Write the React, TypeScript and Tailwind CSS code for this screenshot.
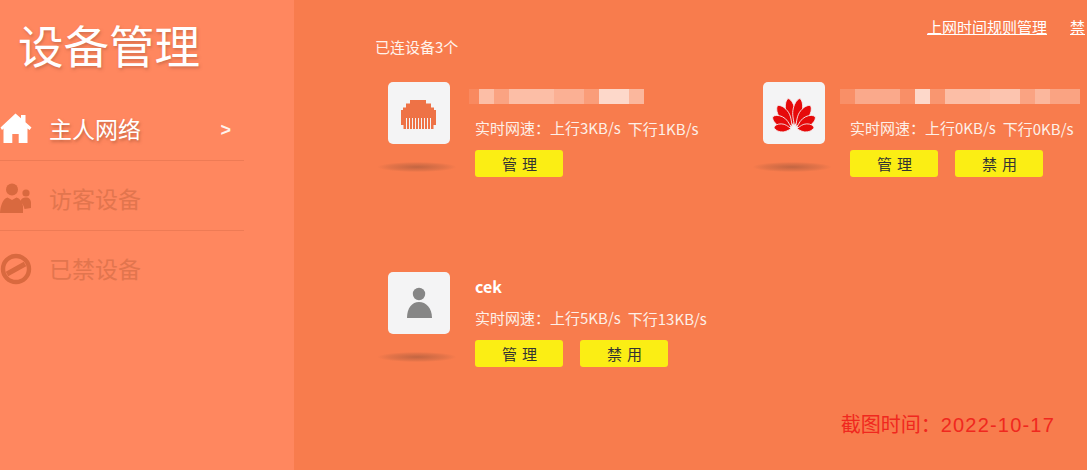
import React from "react";

const cjk = "font-['Noto_Sans_CJK_SC','Noto_Sans',sans-serif]";

function House() {
  return (
    <svg width="32" height="32" viewBox="0 0 32 32" fill="#fff">
      <path d="M15.5 1.5 L21 6.3 V3 H25.5 V10.2 L31.5 15.5 L29.6 18 L27.5 16.4 V31 H18.7 V22 H12.3 V31 H3.5 V16.4 L2 18 L0.5 15.5 Z" />
    </svg>
  );
}

function Guests() {
  return (
    <svg width="32" height="32" viewBox="0 0 32 32" fill="#D9693F">
      <circle cx="12" cy="7.5" r="6" />
      <path d="M0 31 C0.5 24 2.5 17 7.5 15.5 L12 18 L16.5 15.5 C20 16.5 22 19.5 23 24 V31 Z" />
      <circle cx="26" cy="11" r="3.6" />
      <path d="M20.5 20 C21 16.5 23 15.5 26 15.5 C29 15.5 31 17.5 31 21 V26 L24.5 27 C24 24 22.5 21.5 20.5 20 Z" />
    </svg>
  );
}

function Ban() {
  return (
    <svg width="32" height="32" viewBox="0 0 32 32" fill="none" stroke="#D9693F">
      <circle cx="16" cy="16" r="13" strokeWidth="4.4" />
      <path d="M7 21 L25 11" strokeWidth="5" />
    </svg>
  );
}

function Ethernet() {
  return (
    <svg width="62" height="62" viewBox="0 0 62 62">
      <path
        fill="#EE7246"
        d="M22 18 H38 V21.5 H43 V25.5 H46 V28 H48 V43 H45.5 V47 H15.5 V43 H13 V28 H15 V25.5 H18 V21.5 H22 Z"
      />
      <g stroke="#F4F4F5" strokeWidth="1">
        {[18.5, 21.5, 24.5, 27.5, 30.5, 33.5, 36.5, 39.5, 42.5].map((x) => (
          <line key={x} x1={x} x2={x} y1="36" y2="47" />
        ))}
      </g>
    </svg>
  );
}

function Huawei() {
  const petals = [
    [-11, 31, 4.6],
    [11, 31, 4.6],
    [-35, 28.5, 5],
    [35, 28.5, 5],
    [-60, 24.5, 4.8],
    [60, 24.5, 4.8],
    [-85, 20, 4],
    [85, 20, 4],
  ];
  return (
    <svg width="62" height="62" viewBox="0 0 62 62">
      <g transform="translate(31 47)" fill="#E60A0A">
        {petals.map(([a, l, w]) => (
          <path
            key={a}
            transform={`rotate(${a})`}
            d={`M0 -3 C${-w * 0.5} ${-l * 0.3} ${-w * 1.1} ${-l * 0.45} ${-w} ${-l * 0.66} C${-w * 0.95} ${-l * 0.84} ${-w * 0.45} ${-l * 0.98} 0 ${-l} C${w * 0.45} ${-l * 0.98} ${w * 0.95} ${-l * 0.84} ${w} ${-l * 0.66} C${w * 1.1} ${-l * 0.45} ${w * 0.5} ${-l * 0.3} 0 -3 Z`}
            stroke="#F4F4F5"
            strokeWidth="0.8"
          />
        ))}
      </g>
    </svg>
  );
}

function Person() {
  return (
    <svg width="62" height="62" viewBox="0 0 62 62" fill="#868686">
      <circle cx="31" cy="22" r="6.2" />
      <path d="M19 46 C19 36 24 30 31 30 C38 30 44 36 44 46 Z" />
    </svg>
  );
}

const nameOne = [
  "w-[10px] bg-white/10",
  "w-[15px] bg-white/50",
  "w-[15px] bg-white/30",
  "w-[45px] bg-white/50",
  "w-[30px] bg-white/40",
  "w-[15px] bg-white/25",
  "w-[30px] bg-white/70",
  "w-[15px] bg-white/45",
];

const nameTwo = [
  "w-[15px] bg-white/15",
  "w-[45px] bg-white/35",
  "w-[15px] bg-white/15",
  "w-[15px] bg-white/70",
  "w-[15px] bg-white/20",
  "w-[45px] bg-white/50",
  "w-[30px] bg-white/55",
  "w-[15px] bg-white/30",
  "w-[15px] bg-white/45",
  "w-[30px] bg-white/30",
];

function Blur({ blocks, shift }: { blocks: string[]; shift: string }) {
  return (
    <div className={`flex h-[15px] mt-[7px] mb-[14px] ${shift}`}>
      {blocks.map((c, i) => (
        <div key={i} className={`h-full ${c}`} />
      ))}
    </div>
  );
}

function Btn({ label }: { label: string }) {
  return (
    <button className="w-[88px] h-[27px] pl-[6px] rounded-[3px] bg-[#FBEE14] text-[#333] text-[15px] leading-[27px] tracking-[5px] text-center">
      {label}
    </button>
  );
}

function Card({
  icon,
  name,
  up,
  down,
  disable,
}: {
  icon: React.ReactNode;
  name: React.ReactNode;
  up: string;
  down: string;
  disable?: boolean;
}) {
  return (
    <div className="flex w-[375px] h-full">
      <div className="relative w-[62px] h-[62px] shrink-0">
        <div className="w-[62px] h-[62px] rounded-[5px] bg-[#F4F4F5]">{icon}</div>
        <div className="absolute left-[-10px] top-[80px] w-[78px] h-[10px] bg-[radial-gradient(ellipse_at_center,rgba(120,70,50,0.42)_0%,rgba(120,70,50,0.16)_50%,rgba(120,70,50,0)_72%)]" />
      </div>
      <div className="ml-[25px] flex flex-col">
        <div className="h-[36px]">{name}</div>
        <div className="flex h-[32px] items-start text-[15px] leading-[20px] text-[#FDF0E8] whitespace-nowrap">
          <span>{"实时网速\uFF1A"}{up}</span>
          <span className="ml-[7px] mt-px">{down}</span>
        </div>
        <div className="flex gap-[17px]">
          <Btn label="管理" />
          {disable && <Btn label="禁用" />}
        </div>
      </div>
    </div>
  );
}

function NavItem({
  icon,
  label,
  active,
  last,
  chevron,
}: {
  icon: React.ReactNode;
  label: string;
  active?: boolean;
  last?: boolean;
  chevron?: boolean;
}) {
  return (
    <div
      className={`flex items-center w-[244px] h-[70px] pt-[5px] ${
        last ? "" : "border-b border-[#EE7B55]"
      }`}
    >
      <div className="w-[49px] shrink-0">{icon}</div>
      <span
        className={
          active
            ? "text-[23px] text-white [text-shadow:1px_2px_3px_rgba(160,80,50,0.6)]"
            : "text-[23px] text-[#E2754E]"
        }
      >
        {label}
      </span>
      {chevron && (
        <span className="ml-auto mr-[13px] mt-[4px] text-[18px] font-bold text-[#FFF3EC] font-['Liberation_Sans',sans-serif]">
          &gt;
        </span>
      )}
    </div>
  );
}

export default function App() {
  return (
    <div className={`flex w-[1087px] h-[470px] overflow-hidden bg-[#F87C4D] ${cjk}`}>
      <aside className="w-[294px] shrink-0 bg-[#FF875F]">
        <div className="h-[91px] pl-[18px] pt-[10px] text-[45.5px] leading-[68px] text-white [text-shadow:1px_2px_3px_rgba(170,90,60,0.5)]">
          设备管理
        </div>
        <NavItem icon={<House />} label="主人网络" active chevron />
        <NavItem icon={<Guests />} label="访客设备" />
        <NavItem icon={<Ban />} label="已禁设备" last />
      </aside>
      <main className="flex-1 min-w-0 overflow-hidden">
        <div className="flex justify-end gap-[23px] h-[37px] pt-[17px] pr-[2px] text-[15px] leading-[20px] text-white underline whitespace-nowrap">
          <span>上网时间规则管理</span>
          <span>禁</span>
        </div>
        <div className="pl-[81px] text-[15px] leading-[20px] text-[#FFF3EC]">已连设备3个</div>
        <div className="grid grid-cols-[375px_375px] grid-rows-[190px_130px] mt-[25px] pl-[94px]">
          <Card
            icon={<Ethernet />}
            name={<Blur blocks={nameOne} shift="-ml-[6px]" />}
            up="上行3KB/s"
            down="下行1KB/s"
          />
          <Card
            icon={<Huawei />}
            name={<Blur blocks={nameTwo} shift="-ml-[10px]" />}
            up="上行0KB/s"
            down="下行0KB/s"
            disable
          />
          <Card
            icon={<Person />}
            name={<div className="text-[16px] font-bold leading-[28px] text-white">cek</div>}
            up="上行5KB/s"
            down="下行13KB/s"
            disable
          />
        </div>
        <div className="mt-[9px] pr-[32px] text-right text-[20px] leading-[28px] text-[#F0281E] font-['Liberation_Sans','Noto_Sans_CJK_SC',sans-serif] whitespace-nowrap">
          {"截图时间\uFF1A"}<span className="tracking-[1.2px]">2022-10-17</span>
        </div>
      </main>
    </div>
  );
}
